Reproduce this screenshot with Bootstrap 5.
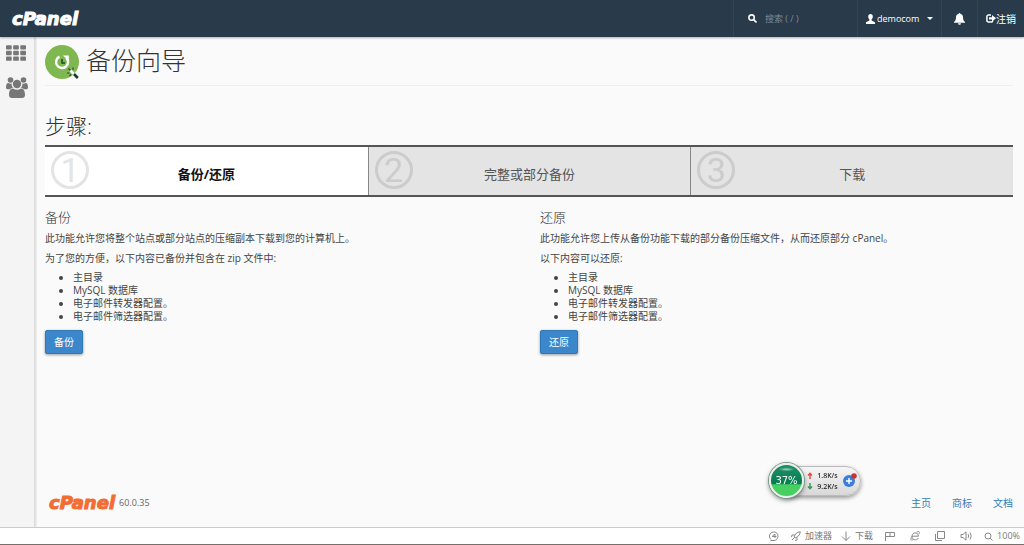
<!DOCTYPE html>
<html lang="zh-CN">
<head>
<meta charset="utf-8">
<meta name="viewport" content="width=device-width, initial-scale=1">
<title>cPanel - 备份向导</title>
<link href="https://cdn.jsdelivr.net/npm/bootstrap@5.3.0/dist/css/bootstrap.min.css" rel="stylesheet">
<style>
  body { font-family: "Open Sans", "Noto Sans CJK SC", sans-serif; font-size: 10px; line-height: 14px; color: #444; background: #fafafa; }
  svg { display: block; flex: none; }
  a { text-decoration: none; }

  .topbar { height: 37px; background: #293a4a; box-shadow: 0 1px 2px rgba(0,0,0,.3); position: relative; z-index: 2; }
  .brand { font-family: "DejaVu Sans", sans-serif; font-weight: 700; font-style: italic; font-size: 18px; line-height: 20px; color: #fff; -webkit-text-stroke: 1px currentColor; }
  .brand-orange { color: #f36c34; }
  .topbar .cell { border: 0; border-left: 1px solid #314558; background: none; color: #fff; padding: 0 8px; font-size: 10px; gap: 2px; }
  .topbar .search-cell { width: 124px; padding: 0 0 0 14px; gap: 8px; }
  .search-cell input { background: none; border: 0; outline: 0; color: #fff; padding: 0; width: 80px; font-size: 9px; }
  .search-cell input::placeholder { color: #808b95; opacity: 1; }
  .topbar .user-cell { font-size: 9px; width: 84px; }
  .topbar .bell-cell { padding: 0 12px; }
  .topbar .out-cell { width: 47px; gap: 0; }
  .caret { border: 3px solid transparent; border-top-color: #fff; border-bottom: 0; margin-left: auto; }

  .side { width: 35px; background: #f4f4f4; border-right: 1px solid #ddd; box-shadow: 1px 0 2px rgba(0,0,0,.14); padding: 8px 6px; }
  .content { padding: 8px 11px 0 10px; min-width: 0; }
  .page-head { padding-bottom: 6px; border-bottom: 1px solid #eee; gap: 7px; }
  h1 { font-size: 25px; line-height: 30px; font-weight: 300; color: #333; }
  h2 { font-size: 21px; line-height: 26px; font-weight: 300; margin: 27px 0 6px; color: #333; }
  h3 { font-size: 13px; line-height: 16px; font-weight: 300; margin: 12px 0 6px; color: #333; }

  .steps { border-top: 2px solid #555; border-bottom: 2px solid #555; }
  .step { height: 48px; padding: 4px 6px 0; background: #e4e4e4; color: #555; font-size: 13px; }
  .step + .step { border-left: 1px solid #888; }
  .step.current { background: #fff; color: #111; font-weight: 700; }
  .ring { width: 38px; height: 38px; border: 3px solid #ccc; border-radius: 50%; color: #ccc; font: 400 34px/32px Roboto, sans-serif; margin-right: -38px; }
  .current .ring { border-color: #e4e4e4; color: #e4e4e4; }
  .step-name { line-height: 20px; padding-top: 13px; }

  .cols { --bs-gutter-x: 22px; }
  .content p { margin: 0 0 6px; }
  .content ul { padding-left: 28px; margin: 0 0 7px; line-height: 13px; }
  .btn-go { font-size: 10px; line-height: 14px; padding: 4px 8px; color: #fff; background: #3a87cb; border: 1px solid #3179b5; border-radius: 2px; box-shadow: 0 1px 3px rgba(0,0,0,.4); }
  .btn-go:hover { background: #3179b5; color: #fff; }
  .foot { padding: 0 0 14px 4px; }
  .foot nav { gap: 21px; }
  .foot a.flink { color: #337ab7; }
  .foot .version { font-size: 9px; color: #666; }

  .statusbar { height: 18px; background: #fff; border-top: 1px solid #ccc; border-bottom: 1px solid #776f6a; color: #777; padding: 0 4px; font-size: 9px; gap: 9px; }
  .statusbar svg { stroke: #888; fill: none; }
  .statusbar > svg { margin: 0 3px; }

  .meter { position: fixed; right: 163px; bottom: 47px; z-index: 3; }
  .meter-pill { height: 30px; width: 75px; margin-left: -18px; padding: 0 3px 0 20px; border: 1px solid #bbb; border-radius: 0 15px 15px 0; background: linear-gradient(#f6f6f6, #d8d8d8); box-shadow: 0 2px 4px rgba(0,0,0,.4); }
  .meter-ball { width: 35px; height: 35px; border-radius: 50%; border: 2px solid #e8f0ec; background: radial-gradient(ellipse 8px 2px at 50% 14%, rgba(255,255,255,.6), transparent), linear-gradient(#1f9168, #077b50 60%, #47cf62 64%, #47cf62); color: #fff; font: 10px/31px "DejaVu Sans", sans-serif; text-align: center; box-shadow: 0 0 0 1px #7b9a8b, 0 2px 5px rgba(0,0,0,.5); position: relative; }
  .rates { font-size: 7px; line-height: 11px; color: #222; font-family: "Noto Sans", sans-serif; font-weight: 500; }
</style>
</head>
<body class="d-flex flex-column min-vh-100">

<header class="topbar d-flex align-items-stretch">
  <a href="#" class="brand align-self-center ms-2 ps-1 me-auto">cPanel</a>
  <label class="cell search-cell d-flex align-items-center">
    <svg width="9" height="9" viewBox="0 0 9 9" fill="none" stroke="#fff" stroke-width="1.6"><circle cx="3.6" cy="3.6" r="2.7"/><path d="M5.6 5.6 8.5 8.5"/></svg>
    <input type="text" placeholder="搜索 ( / )" aria-label="搜索">
  </label>
  <button type="button" class="cell user-cell d-flex align-items-center">
    <svg width="9" height="10" viewBox="0 0 9 10" fill="#fff"><path d="M4.500 0C6 0 6.800 1 6.800 2.500c0 1.300-.5 2.300-1.200 2.900v1.200L9 8.300V10H0V8.300l3.400-1.700V5.400C2.700 4.800 2.200 3.800 2.200 2.500 2.200 1 3 0 4.500 0z"/></svg>
    <span>democom</span><span class="caret"></span>
  </button>
  <button type="button" class="cell bell-cell d-flex align-items-center" aria-label="通知">
    <svg width="11" height="12" viewBox="0 0 11 12" fill="#fff"><path d="M5.500 0c.5 0 .8.300.8.800 1.800.4 2.700 1.700 2.700 3.400C9 7 9.800 8 11 9v.8H0V9c1.200-1 2-2 2-4.800C2 2.500 2.900 1.200 4.700.8c0-.5.300-.8.800-.8zM4 10.300h3a1.500 1.500 0 0 1-3 0z"/></svg>
  </button>
  <a href="#" class="cell out-cell d-flex align-items-center">
    <svg width="10" height="9" viewBox="0 0 10 9"><path d="M5 1H2.500A1.600 1.600 0 0 0 .9 2.600v3.800A1.600 1.600 0 0 0 2.500 8H5.500Q6.800 8 6.800 6.500" fill="none" stroke="#fff" stroke-width="1.500"/><path d="M3 3.200h3V1l4 3.300-4 3.300V5.500H3z" fill="#fff"/></svg>注销
  </a>
</header>

<div class="d-flex flex-grow-1">
  <nav class="side flex-shrink-0" aria-label="侧栏">
    <a href="#" class="d-block mb-3" aria-label="主页">
      <svg width="20" height="16" viewBox="0 0 21 16.500" fill="#777"><rect width="6" height="4.500" rx="1"/><rect x="7.500" width="6" height="4.500" rx="1"/><rect x="15" width="6" height="4.500" rx="1"/><rect y="6" width="6" height="4.500" rx="1"/><rect x="7.500" y="6" width="6" height="4.500" rx="1"/><rect x="15" y="6" width="6" height="4.500" rx="1"/><rect y="12" width="6" height="4.500" rx="1"/><rect x="7.500" y="12" width="6" height="4.500" rx="1"/><rect x="15" y="12" width="6" height="4.500" rx="1"/></svg>
    </a>
    <a href="#" class="d-block" aria-label="用户管理器">
      <svg width="22" height="21" viewBox="1 0 22 21" fill="#777"><circle cx="5.500" cy="3" r="2.800"/><circle cx="18.500" cy="3" r="2.800"/><circle cx="12" cy="7" r="4.200"/><path d="M1 10.500C1 8 1.600 6 3.400 6c1 .6 2 .8 3.200.6-.1 2 .5 3.300 1.500 4.400-1.300 0-2.300.5-3.100 1.300H3c-1.300 0-2-.7-2-1.800zM23 10.500c0-2.500-.6-4.500-2.400-4.500-1 .6-2 .8-3.200.6.1 2-.5 3.300-1.500 4.400 1.300 0 2.300.5 3.100 1.300h2c1.300 0 2-.7 2-1.800zM4 18c0-3.500.9-6.500 4-6.500 2.500 1.600 5.500 1.600 8 0 3.100 0 4 3 4 6.500 0 1.800-1.100 3-2.800 3H6.800C5.100 21 4 19.800 4 18z"/></svg>
    </a>
  </nav>

  <main class="content flex-grow-1 d-flex flex-column">
    <div class="page-head d-flex align-items-start">
      <svg width="34" height="34" viewBox="0 0 34 34"><circle cx="17" cy="17" r="17" fill="#7fb850"/><path d="M14.500 11.600A6 6 0 1 0 21.300 12.800" fill="none" stroke="#fff" stroke-width="2.400"/><path d="M18 10.400h5.800v5.800z" fill="#fff"/><path d="M17 14V18H20" fill="none" stroke="#1f4a2a" stroke-width="1.500"/><path d="M28.500 28.500 32.800 33" stroke="#19392e" stroke-width="2.600"/><path d="M23.500 23.500l2 2M28 22.500v2.500M22 28h2.500M24.500 31l1.500-1.500" stroke="#24452f" stroke-width="1.100"/><path d="M25.500 25.500l3.500 3.500" stroke="#fff" stroke-width="2.600"/></svg>
      <h1 class="m-0">备份向导</h1>
    </div>
    <h2>步骤:</h2>
    <div class="steps row g-0">
      <div class="step col-4 d-flex current"><span class="ring text-center">1</span><span class="step-name flex-grow-1 text-center">备份/还原</span></div>
      <div class="step col-4 d-flex"><span class="ring text-center">2</span><span class="step-name flex-grow-1 text-center">完整或部分备份</span></div>
      <div class="step col-4 d-flex"><span class="ring text-center">3</span><span class="step-name flex-grow-1 text-center">下载</span></div>
    </div>

    <div class="row cols">
      <section class="col-6">
        <h3>备份</h3>
        <p>此功能允许您将整个站点或部分站点的压缩副本下载到您的计算机上。</p>
        <p>为了您的方便，以下内容已备份并包含在 zip 文件中:</p>
        <ul><li>主目录</li><li>MySQL 数据库</li><li>电子邮件转发器配置。</li><li>电子邮件筛选器配置。</li></ul>
        <button type="button" class="btn btn-go">备份</button>
      </section>
      <section class="col-6">
        <h3>还原</h3>
        <p>此功能允许您上传从备份功能下载的部分备份压缩文件，从而还原部分 cPanel。</p>
        <p>以下内容可以还原:</p>
        <ul><li>主目录</li><li>MySQL 数据库</li><li>电子邮件转发器配置。</li><li>电子邮件筛选器配置。</li></ul>
        <button type="button" class="btn btn-go">还原</button>
      </section>
    </div>

    <footer class="foot d-flex align-items-center mt-auto">
      <a href="#" class="brand brand-orange">cPanel</a>
      <span class="version ms-1">60.0.35</span>
      <nav class="ms-auto d-flex" aria-label="页脚"><a class="flink" href="#">主页</a><a class="flink" href="#">商标</a><a class="flink" href="#">文档</a></nav>
    </footer>
  </main>
</div>

<div class="statusbar d-flex align-items-center justify-content-end">
  <svg width="10" height="10" viewBox="0 0 10 10"><path d="M2 8.500A4.300 4.300 0 1 1 5 9.500H1.500M3 5.500 6 3v4M3 5.500h4.500"/></svg>
  <span class="d-flex align-items-center gap-1"><svg width="10" height="10" viewBox="0 0 10 10"><path d="M3 6C4 3 6 1 9.300.8 9 4 7 6 4 7zM3.500 4H1L.5 6M6 6.500V9l-2 .5M1 9l2-2"/></svg>加速器</span>
  <span class="d-flex align-items-center gap-1"><svg width="10" height="10" viewBox="0 0 10 10"><path d="M5 .5v9M1 5.500l4 4 4-4"/></svg>下载</span>
  <svg width="10" height="10" viewBox="0 0 10 10"><path d="M.5 10V1.500H5v4H.5M5 1.500h4.500v4H5"/></svg>
  <svg width="10" height="10" viewBox="0 0 10 10"><path d="M2 5.200h6.500C8.500.8 2 .8 2 5.200 2 9.500 7 9.800 8.300 7M6.500 1.200C9-.2 10 .8 9 3M2 5.500C.2 8 .5 10 3.500 8.600"/></svg>
  <svg width="10" height="10" viewBox="0 0 10 10"><path d="M2.500.5h7v7h-7zM.5 3v6.500H7"/></svg>
  <svg width="12" height="10" viewBox="0 0 12 10"><path d="M1 3.500h2L6 .8v8.400L3 6.500H1zM8 3q1.500 2 0 4M10 1.500q2.500 3.500 0 7"/></svg>
  <span class="d-flex align-items-center gap-1"><svg width="9" height="9" viewBox="0 0 9 9"><circle cx="4" cy="4" r="3"/><path d="M6 6l2.500 2.500"/></svg>100%</span>
</div>

<div class="meter d-flex align-items-center">
  <div class="meter-ball">37%</div>
  <div class="meter-pill d-flex align-items-center justify-content-between">
    <svg width="6" height="18" viewBox="0 0 6 18" fill="none" stroke-width="1.400"><path d="M3 7V2M1 3.500 3 1.300l2 2.200" stroke="#e0483c"/><path d="M3 11v5M1 14.500l2 2.200 2-2.200" stroke="#2f9a55"/></svg>
    <div class="rates text-end"><div>1.8K/s</div><div>9.2K/s</div></div>
    <svg width="15" height="15" viewBox="0 0 15 15"><circle cx="7" cy="8" r="6" fill="#3b7edb"/><path d="M7 5v6M4 8h6" stroke="#fff" stroke-width="1.400"/><circle cx="12" cy="3" r="2.800" fill="#c73434"/></svg>
  </div>
</div>

<script src="https://cdn.jsdelivr.net/npm/bootstrap@5.3.0/dist/js/bootstrap.bundle.min.js"></script>
</body>
</html>
